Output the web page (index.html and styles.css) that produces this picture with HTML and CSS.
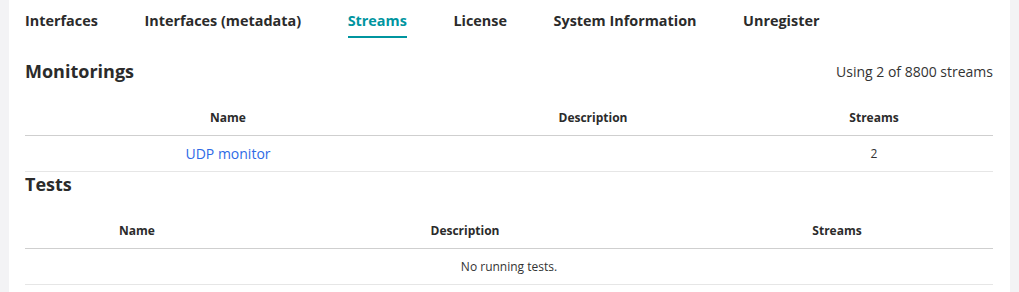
FILE: index.html
```html
<!DOCTYPE html>
<html lang="en">
<head>
  <meta charset="UTF-8" />
  <title>Streams</title>
  <link rel="stylesheet" href="styles.css">
</head>
<body>
  <div class="card">
    <nav class="tabs">
      <a class="tab">Interfaces</a>
      <a class="tab">Interfaces (metadata)</a>
      <a class="tab active">Streams</a>
      <a class="tab">License</a>
      <a class="tab">System Information</a>
      <a class="tab">Unregister</a>
    </nav>

    <div class="section-head first">
      <h2>Monitorings</h2>
      <span class="usage">Using 2 of 8800 streams</span>
    </div>
    <table class="list">
      <colgroup>
        <col style="width:406px"><col style="width:324px"><col style="width:238px">
      </colgroup>
      <thead>
        <tr><th>Name</th><th>Description</th><th>Streams</th></tr>
      </thead>
      <tbody>
        <tr><td><a class="link" href="#">UDP monitor</a></td><td></td><td>2</td></tr>
      </tbody>
    </table>

    <div class="section-head">
      <h2>Tests</h2>
    </div>
    <table class="list">
      <colgroup>
        <col style="width:224px"><col style="width:432px"><col style="width:312px">
      </colgroup>
      <thead>
        <tr><th>Name</th><th>Description</th><th>Streams</th></tr>
      </thead>
      <tbody>
        <tr><td colspan="3">No running tests.</td></tr>
      </tbody>
    </table>
  </div>
</body>
</html>
```

FILE: styles.css
```css
html, body { margin: 0; height: 100%; }
body { background: #f3f3f5; font-family: "Open Sans", sans-serif; color: #333; overflow: hidden; }
.card { background: #fff; margin: 0 9px; padding: 0 17px 0 16px; min-height: 100%; box-sizing: border-box; }

.tabs { display: flex; gap: 46.6px; }
.tab { font-size: 14.4px; font-weight: 700; line-height: 20px; color: #2b2b2b; padding: 11px 0 5px; border-bottom: 2px solid transparent; cursor: pointer; }
.tab.active { color: #00959f; border-bottom-color: #00959f; }

.section-head { display: flex; justify-content: space-between; align-items: center; margin-bottom: 16px; }
.section-head.first { margin-top: 21px; }
.section-head h2 { margin: 0; font-size: 18px; line-height: 24px; font-weight: 700; color: #2b2b2b; }
.usage { font-size: 14px; color: #333; }

.list { width: 100%; border-collapse: collapse; table-layout: fixed; }
.list th, .list td { text-align: center; padding: 0; height: 35px; }
.list th { font-size: 12px; font-weight: 700; color: #2b2b2b; border-bottom: 1px solid #cfcfcf; height: 36px; }
.list td { font-size: 12px; border-bottom: 1px solid #e6e6e6; }
.link { color: #2e6be6; text-decoration: none; font-size: 14px; }
```
